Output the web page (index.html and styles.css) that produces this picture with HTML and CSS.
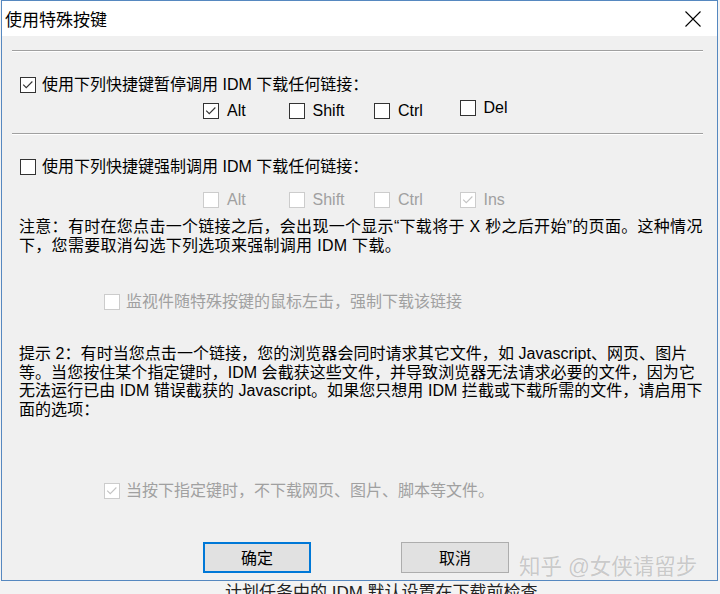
FILE: index.html
```html
<!DOCTYPE html>
<html lang="zh-CN">
<head>
    <meta charset="UTF-8">
    <meta name="viewport" content="width=device-width, initial-scale=1.0">
    <title>使用特殊按键</title>
    <link rel="stylesheet" href="styles.css">
</head>
<body>

<div class="dialog">
    <div class="titlebar">
        <span class="title">使用特殊按键</span>
        <svg class="close" width="16" height="16" viewBox="0 0 16 16">
            <path d="M0.5 0.5 L15.5 15.5 M15.5 0.5 L0.5 15.5" stroke="#000" stroke-width="1.1" fill="none"/>
        </svg>
    </div>

    <div class="content">
        <div class="sep sep-top"></div>

        <!-- 暂停调用 -->
        <label class="check row-pause">
            <span class="box"><svg viewBox="0 0 16 16"><polyline points="2.5,7.5 6,11 13,4"/></svg></span>
            使用下列快捷键暂停调用 IDM 下载任何链接：
        </label>
        <div class="keys keys-on">
            <label class="check key"><span class="box"><svg viewBox="0 0 16 16"><polyline points="2.5,7.5 6,11 13,4"/></svg></span>Alt</label>
            <label class="check key"><span class="box"></span>Shift</label>
            <label class="check key"><span class="box"></span>Ctrl</label>
            <label class="check key raised"><span class="box"></span>Del</label>
        </div>

        <div class="sep sep-mid"></div>

        <!-- 强制调用 -->
        <label class="check row-force">
            <span class="box"></span>
            使用下列快捷键强制调用 IDM 下载任何链接：
        </label>
        <div class="keys keys-off disabled">
            <label class="check key"><span class="box"></span>Alt</label>
            <label class="check key"><span class="box"></span>Shift</label>
            <label class="check key"><span class="box"></span>Ctrl</label>
            <label class="check key"><span class="box"><svg viewBox="0 0 16 16"><polyline points="2.5,7.5 6,11 13,4"/></svg></span>Ins</label>
        </div>

        <p class="note">注意：有时在您点击一个链接之后，会出现一个显示“下载将于 X 秒之后开始”的页面。这种情况<br>下，您需要取消勾选下列选项来强制调用 IDM 下载。</p>

        <label class="check row-monitor disabled">
            <span class="box"></span>
            监视件随特殊按键的鼠标左击，强制下载该链接
        </label>

        <p class="hint">提示 2：有时当您点击一个链接，您的浏览器会同时请求其它文件，如 Javascript、网页、图片<br>等。当您按住某个指定键时，IDM 会截获这些文件，并导致浏览器无法请求必要的文件，因为它<br>无法运行已由 IDM 错误截获的 Javascript。如果您只想用 IDM 拦截或下载所需的文件，请启用下<br>面的选项：</p>

        <label class="check row-skip disabled">
            <span class="box"><svg viewBox="0 0 16 16"><polyline points="2.5,7.5 6,11 13,4"/></svg></span>
            当按下指定键时，不下载网页、图片、脚本等文件。
        </label>

        <div class="buttons">
            <button type="button" class="btn btn-default">确定</button>
            <button type="button" class="btn">取消</button>
        </div>
    </div>
</div>

<div class="behind"><span class="behind-text">计划任务中的 IDM 默认设置在下载前检查</span></div>

<div class="watermark">知乎 @女侠请留步</div>

</body>
</html>
```

FILE: styles.css
```css
* {
    box-sizing: border-box;
}
body {
    margin: 0;
    width: 720px;
    height: 594px;
    overflow: hidden;
    position: relative;
    background: #f3f3f3;
    font-family: "Liberation Sans", "Noto Sans CJK SC", sans-serif;
    font-size: 16px;
    color: #000;
}
.dialog {
    width: 717px;
    margin-left: 1px;
    border: 1px solid #5688c0;
    background: #f0f0f0;
}
.titlebar {
    height: 35px;
    background: #fff;
    display: flex;
    align-items: center;
    justify-content: space-between;
    padding: 0 16px 0 3px;
}
.title {
    font-size: 17px;
}
.close {
    display: block;
}
.content {
    padding: 0 0 7px 17px;
}
.sep {
    width: 691px;
    height: 2px;
    margin-left: -7px;
    border-top: 1px solid #a0a0a0;
    border-bottom: 1px solid #fff;
}
.sep-top {
    margin-top: 14px;
}
.sep-mid {
    margin-top: 12px;
}
.check {
    display: flex;
    align-items: center;
    gap: 6px;
    height: 20px;
    line-height: 20px;
    white-space: nowrap;
}
.box {
    width: 16px;
    height: 16px;
    flex: none;
    border: 1px solid #333;
    background: #fff;
}
.box svg {
    display: block;
    width: 14px;
    height: 14px;
}
.box polyline {
    fill: none;
    stroke: #333;
    stroke-width: 1.3;
}
.row-pause {
    margin-top: 23px;
    margin-left: 1px;
}
.row-force {
    margin-top: 22px;
    margin-left: 1px;
}
.keys {
    display: flex;
    align-items: flex-start;
    padding-left: 184px;
}
.keys-on {
    margin-top: 6px;
}
.keys-off {
    margin-top: 13px;
}
.key {
    width: 85.5px;
    gap: 8px;
}
.key.raised {
    margin-top: -3px;
}
.disabled {
    color: #a0a0a0;
}
.disabled .box {
    border-color: #ccc;
}
.disabled .box polyline {
    stroke: #c4c4c4;
}
.note {
    margin: 8px 0 0;
    line-height: 18.5px;
    letter-spacing: 0.3px;
    white-space: nowrap;
}
.row-monitor {
    margin-top: 37px;
    margin-left: 85px;
}
.hint {
    margin: 33px 0 0;
    line-height: 18.7px;
    letter-spacing: 0.05px;
    white-space: nowrap;
}
.row-skip {
    margin-top: 61px;
    margin-left: 85px;
}
.buttons {
    display: flex;
    gap: 90px;
    margin-top: 41px;
    padding-left: 184px;
}
.btn {
    width: 108px;
    height: 31px;
    background: #e1e1e1;
    border: 1px solid #adadad;
    font-family: inherit;
    font-size: 16px;
    color: #000;
    padding: 0;
}
.btn-default {
    border: 2px solid #0078d7;
}
.behind {
    height: 13px;
    overflow: hidden;
    padding-left: 225px;
}
.behind-text {
    display: block;
    margin-top: 2px;
    font-size: 17px;
    line-height: 20px;
    color: #222;
    white-space: nowrap;
}
.watermark {
    position: absolute;
    left: 519px;
    top: 549px;
    font-size: 21.5px;
    color: rgba(140, 140, 140, 0.45);
    text-shadow: 0 0 1px rgba(255, 255, 255, 0.8);
    white-space: nowrap;
}
```
